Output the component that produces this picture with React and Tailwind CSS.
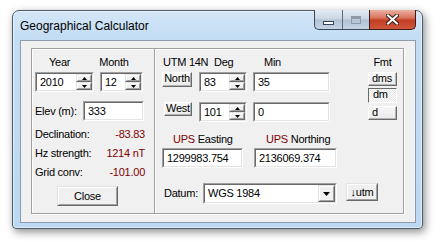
import React from 'react';

const Sunken = ({ className = '', children }) => (
  <div className={`border border-t-[#a0a0a0] border-l-[#a0a0a0] border-r-white border-b-white ${className}`}>
    <div className="flex h-full items-center border border-t-[#696969] border-l-[#696969] border-r-[#e3e3e3] border-b-[#e3e3e3] bg-white">
      {children}
    </div>
  </div>
);

const Raised = ({ className = '', inner = '', children }) => (
  <div className={`border border-t-[#e3e3e3] border-l-[#e3e3e3] border-r-[#696969] border-b-[#696969] ${className}`}>
    <div className={`flex h-full items-center border border-t-white border-l-white border-r-[#a0a0a0] border-b-[#a0a0a0] bg-[#f0f0f0] leading-none ${inner}`}>
      {children}
    </div>
  </div>
);

// small flat toggle buttons (North / West / dms / d)
const SmallBtn = ({ className = '', children }) => (
  <div className={`flex items-start border border-t-white border-l-white border-r-[#696969] border-b-[#696969] bg-[linear-gradient(180deg,#f6f6f6,#ebebeb)] leading-[11px] shadow-[inset_-1px_-1px_0_#b4b4b4] ${className}`}>
    {children}
  </div>
);

const Arrow = ({ up }) => (
  <svg width="5" height="3" viewBox="0 0 5 3">
    <polygon points={up ? '2.5,0 5,3 0,3' : '0,0 5,0 2.5,3'} fill="#000" />
  </svg>
);

const Spin = ({ value, className }) => (
  <Sunken className={className}>
    <span className="flex-1 pl-[3px]">{value}</span>
    <div className="flex h-full w-[16px] flex-col">
      <Raised className="h-1/2" inner="justify-center"><Arrow up /></Raised>
      <Raised className="h-1/2" inner="justify-center"><Arrow /></Raised>
    </div>
  </Sunken>
);

const Readout = ({ label, value }) => (
  <div className="flex h-[19px] w-[110px] items-center justify-between">
    <span>{label}</span>
    <span className="text-[#800000]">{value}</span>
  </div>
);

export default function App() {
  return (
    <div className="h-[248px] w-[440px] overflow-hidden bg-white pt-[10px] pl-[12px] font-['Liberation_Sans',Arial,sans-serif] text-[11px] leading-[13px] tracking-[-0.25px] text-black">
      {/* Window frame */}
      <div className="flex h-[219px] w-[411px] flex-col rounded-t-[7px] rounded-b-[4px] border border-[#4c5a6a] bg-[linear-gradient(180deg,#d4e6f7_0%,#c3ddf4_12%,#bcd8f2_100%)] shadow-[2px_3px_9px_rgba(0,0,0,0.45),inset_0_0_0_1px_rgba(255,255,255,0.55)]">
        {/* Title bar */}
        <div className="flex h-[29px]">
          <div className="pl-[7px] pt-[8px] text-[12px] leading-[14px] tracking-normal">Geographical Calculator</div>
          <div className="ml-auto mr-[6px] -mt-px flex h-[20px] self-start">
            <div className="flex overflow-hidden rounded-bl-[5px] border border-t-0 border-r-0 border-[#3a4757] bg-[linear-gradient(180deg,#e4ebf3_0%,#cbd6e3_45%,#b3c3d6_55%,#c5d3e3_100%)]">
              <div className="flex w-[28px] items-end justify-center border-r border-[#5d6b7b] pb-[4px]">
                <div className="h-[4px] w-[11px] border border-[#3a4757] bg-white" />
              </div>
              <div className="flex w-[26px] items-center justify-center">
                <div className="h-[8px] w-[10px] border border-[#8d9aa9] shadow-[inset_0_2px_0_#8d9aa9]" />
              </div>
            </div>
            <div className="flex w-[47px] items-center justify-center rounded-br-[5px] border border-t-0 border-[#3d1c16] bg-[linear-gradient(180deg,#eab1a4_0%,#d9765f_40%,#c33e25_55%,#d0553a_100%)]">
              <svg width="13" height="11" viewBox="0 0 13 11">
                <path d="M2 1.5 L11 9.5 M11 1.5 L2 9.5" stroke="#3a1f1a" strokeWidth="4" strokeLinecap="square" />
                <path d="M2 1.5 L11 9.5 M11 1.5 L2 9.5" stroke="#fff" strokeWidth="2" strokeLinecap="square" />
              </svg>
            </div>
          </div>
        </div>

        {/* Client area */}
        <div className="ml-[7px] h-[183px] w-[396px] border border-[#8e9baa] bg-[#f0f0f0] pl-[10px] pt-[7px]">
          <div className="flex h-[166px] w-[373px] border border-[#a0a0a0] shadow-[1px_1px_0_#fff,inset_1px_1px_0_#fff]">
            {/* Left panel */}
            <div className="flex w-[122px] flex-col pl-[3px] pt-[7px]">
              <div className="flex h-[13px]">
                <span className="ml-[14px]">Year</span>
                <span className="ml-[29px]">Month</span>
              </div>
              <div className="mt-[3px] flex gap-[6px]">
                <Spin value="2010" className="h-[20px] w-[59px]" />
                <Spin value="12" className="h-[20px] w-[43px]" />
              </div>
              <div className="mt-[9px] flex items-center">
                <span className="w-[48px]">Elev (m):</span>
                <Sunken className="h-[20px] w-[61px]">
                  <span className="pl-[3px]">333</span>
                </Sunken>
              </div>
              <div className="mt-[4px] flex flex-col">
                <Readout label="Declination:" value="-83.83" />
                <Readout label="Hz strength:" value="1214 nT" />
                <Readout label="Grid conv:" value="-101.00" />
              </div>
              <Raised className="ml-[22px] mt-[4px] h-[20px] w-[61px]" inner="justify-center">Close</Raised>
            </div>

            {/* Right panel */}
            <div className="flex flex-1 flex-col border-l border-[#a0a0a0] pt-[7px] shadow-[inset_1px_0_0_#fff]">
              <div className="flex">
                <div className="flex w-[175px] flex-col">
                  <div className="flex h-[13px]">
                    <span className="ml-[8px] w-[51px]">UTM 14N</span>
                    <span className="w-[50px]">Deg</span>
                    <span>Min</span>
                  </div>
                  <div className="mt-[3px] flex items-start">
                    <SmallBtn className="ml-[7px] h-[15px] w-[30px] justify-center">North</SmallBtn>
                    <Spin value="83" className="ml-[7px] h-[20px] w-[48px]" />
                    <Sunken className="ml-[6px] h-[20px] w-[77px]">
                      <span className="pl-[3px]">35</span>
                    </Sunken>
                  </div>
                  <div className="mt-[10px] flex items-start">
                    <SmallBtn className="ml-[9px] h-[14px] w-[28px] justify-center">West</SmallBtn>
                    <Spin value="101" className="ml-[7px] h-[20px] w-[48px]" />
                    <Sunken className="ml-[6px] h-[20px] w-[77px]">
                      <span className="pl-[3px]">0</span>
                    </Sunken>
                  </div>
                </div>
                <div className="ml-[38px] flex w-[29px] flex-col">
                  <span className="h-[13px] text-center">Fmt</span>
                  <SmallBtn className="mt-[3px] h-[14px] pl-[3px]">dms</SmallBtn>
                  <div className="mt-[2px] flex h-[15px] items-start border border-t-[#696969] border-l-[#696969] border-r-white border-b-white bg-[repeating-conic-gradient(#ffffff_0_25%,#e6e6e6_0_50%)] bg-[length:2px_2px] pl-[4px] leading-[11px]">
                    dm
                  </div>
                  <SmallBtn className="mt-[3px] h-[14px] pl-[3px]">d</SmallBtn>
                </div>
              </div>

              <div className="mt-[11px] flex h-[13px]">
                <span className="ml-[18px] w-[93px]">
                  <span className="text-[#800000]">UPS</span> Easting
                </span>
                <span>
                  <span className="text-[#800000]">UPS</span> Northing
                </span>
              </div>
              <div className="mt-[2px] flex">
                <Sunken className="ml-[7px] h-[20px] w-[81px]">
                  <span className="pl-[3px]">1299983.754</span>
                </Sunken>
                <Sunken className="ml-[11px] h-[20px] w-[83px]">
                  <span className="pl-[3px]">2136069.374</span>
                </Sunken>
              </div>

              <div className="mt-[15px] flex items-start">
                <span className="ml-[9px] mt-[4px] w-[39px]">Datum:</span>
                <Sunken className="h-[21px] w-[134px]">
                  <span className="flex-1 pl-[3px]">WGS 1984</span>
                  <Raised className="h-full w-[17px]" inner="justify-center">
                    <svg width="7" height="4" viewBox="0 0 7 4">
                      <polygon points="0,0 7,0 3.5,4" fill="#000" />
                    </svg>
                  </Raised>
                </Sunken>
                <Raised className="ml-[9px] h-[18px] w-[32px]" inner="justify-center">↓utm</Raised>
              </div>
            </div>
          </div>
        </div>
      </div>
    </div>
  );
}
